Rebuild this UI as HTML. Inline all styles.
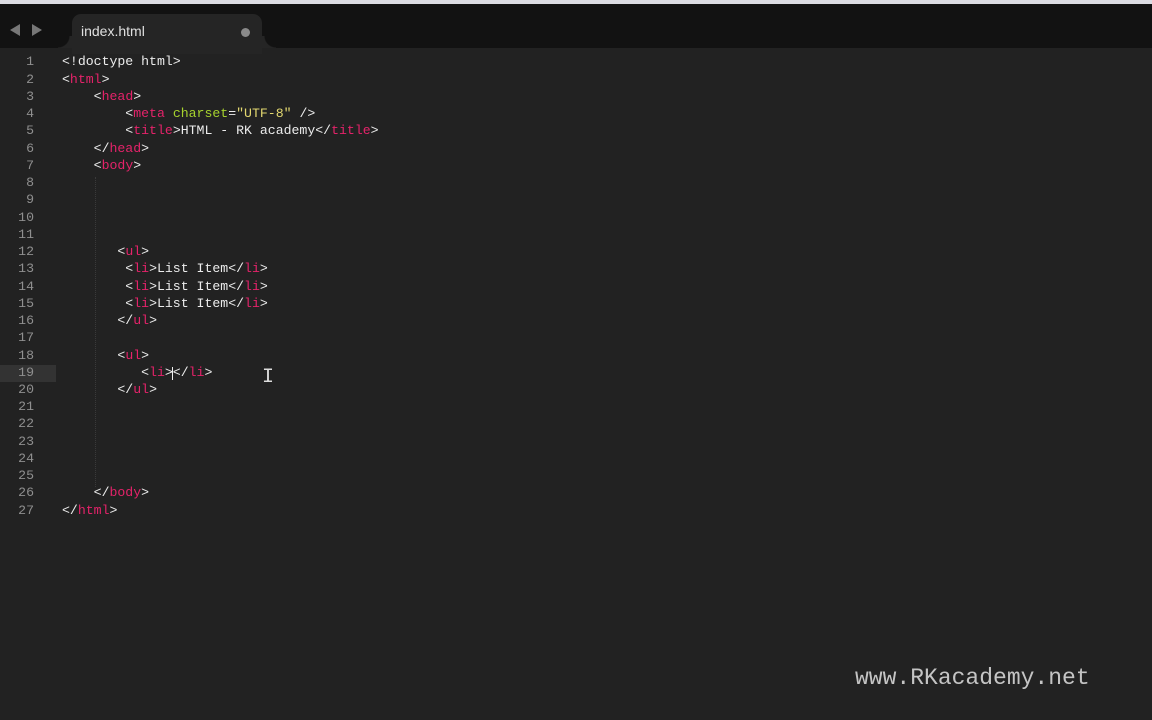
<!DOCTYPE html>
<html><head><meta charset="utf-8"><style>
html,body{margin:0;padding:0;width:1152px;height:720px;overflow:hidden;background:#1f1f1f;}
.top{position:absolute;left:0;top:0;width:1152px;height:4px;background:#dcdce2;}
.bar{position:absolute;left:0;top:4px;width:1152px;height:44px;background:#121212;}
.tab{position:absolute;left:72px;top:14px;width:190px;height:40px;background:#252525;border-radius:9px 9px 0 0;}
.tabl{position:absolute;left:58px;top:36px;width:16px;height:12px;background:radial-gradient(circle at 0 0,#121212 11px,#252525 12px);}
.tabr{position:absolute;left:260px;top:36px;width:16px;height:12px;background:radial-gradient(circle at 100% 0,#121212 11px,#252525 12px);}
.tabt{position:absolute;left:81px;top:23px;font:14px "Liberation Sans",sans-serif;color:#e0e0e0;}
.dot{position:absolute;left:241px;top:28px;width:9px;height:9px;border-radius:50%;background:#8a8a8a;}
.arr{position:absolute;top:24px;width:0;height:0;border-top:6px solid transparent;border-bottom:6px solid transparent;}
.ed{position:absolute;left:0;top:48px;width:1152px;height:672px;background:#222222;}
.w{position:absolute;left:0;top:2px;width:1152px;height:600px;}
.l{position:absolute;left:0;height:17px;line-height:17px;font:13.2px "Liberation Mono",monospace;color:#ececec;white-space:pre;}
.n{position:absolute;left:0;width:34px;text-align:right;color:#8f8f8f;}
.c{position:absolute;left:62px;}
.t{color:#e5236a;}.a{color:#a6d22e;}.s{color:#e3d870;}
.hl{position:absolute;left:0;top:363px;width:56px;height:17px;background:#333;}
.wm{position:absolute;left:855px;top:665px;font:23px "Liberation Mono",monospace;color:#c4c4c4;}
.guide{position:absolute;left:95px;width:1px;border-left:1px dotted #3a3a3a;}
</style></head><body>
<div class="top"></div>
<div class="bar"></div>
<div class="arr" style="left:10px;border-right:10px solid #777;"></div>
<div class="arr" style="left:32px;border-left:10px solid #777;"></div>
<div class="ed"></div>
<div class="tab"></div><div class="tabl"></div><div class="tabr"></div>
<div class="tabt">index.html</div>
<div class="dot"></div>
<div class="w">
<div class="hl"></div>
<div class="guide" style="top:175px;height:310px"></div>
<div class="l" style="top:52px"><span class="n">1</span><span class="c">&lt;!doctype html&gt;</span></div>
<div class="l" style="top:70px"><span class="n">2</span><span class="c">&lt;<span class="t">html</span>&gt;</span></div>
<div class="l" style="top:87px"><span class="n">3</span><span class="c">    &lt;<span class="t">head</span>&gt;</span></div>
<div class="l" style="top:104px"><span class="n">4</span><span class="c">        &lt;<span class="t">meta</span> <span class="a">charset</span>=<span class="s">"UTF-8"</span> /&gt;</span></div>
<div class="l" style="top:121px"><span class="n">5</span><span class="c">        &lt;<span class="t">title</span>&gt;HTML - RK academy&lt;/<span class="t">title</span>&gt;</span></div>
<div class="l" style="top:139px"><span class="n">6</span><span class="c">    &lt;/<span class="t">head</span>&gt;</span></div>
<div class="l" style="top:156px"><span class="n">7</span><span class="c">    &lt;<span class="t">body</span>&gt;</span></div>
<div class="l" style="top:173px"><span class="n">8</span></div>
<div class="l" style="top:190px"><span class="n">9</span></div>
<div class="l" style="top:208px"><span class="n">10</span></div>
<div class="l" style="top:225px"><span class="n">11</span></div>
<div class="l" style="top:242px"><span class="n">12</span><span class="c">       &lt;<span class="t">ul</span>&gt;</span></div>
<div class="l" style="top:259px"><span class="n">13</span><span class="c">        &lt;<span class="t">li</span>&gt;List Item&lt;/<span class="t">li</span>&gt;</span></div>
<div class="l" style="top:277px"><span class="n">14</span><span class="c">        &lt;<span class="t">li</span>&gt;List Item&lt;/<span class="t">li</span>&gt;</span></div>
<div class="l" style="top:294px"><span class="n">15</span><span class="c">        &lt;<span class="t">li</span>&gt;List Item&lt;/<span class="t">li</span>&gt;</span></div>
<div class="l" style="top:311px"><span class="n">16</span><span class="c">       &lt;/<span class="t">ul</span>&gt;</span></div>
<div class="l" style="top:328px"><span class="n">17</span></div>
<div class="l" style="top:346px"><span class="n">18</span><span class="c">       &lt;<span class="t">ul</span>&gt;</span></div>
<div class="l" style="top:363px"><span class="n">19</span><span class="c">          &lt;<span class="t">li</span>&gt;&lt;/<span class="t">li</span>&gt;</span></div>
<div style="position:absolute;left:172px;top:365px;width:1px;height:13px;background:#eee"></div>
<div style="position:absolute;left:262px;top:364px;font:20px 'Liberation Mono',monospace;color:#ddd">I</div>
<div class="l" style="top:380px"><span class="n">20</span><span class="c">       &lt;/<span class="t">ul</span>&gt;</span></div>
<div class="l" style="top:397px"><span class="n">21</span></div>
<div class="l" style="top:414px"><span class="n">22</span></div>
<div class="l" style="top:432px"><span class="n">23</span></div>
<div class="l" style="top:449px"><span class="n">24</span></div>
<div class="l" style="top:466px"><span class="n">25</span></div>
<div class="l" style="top:483px"><span class="n">26</span><span class="c">    &lt;/<span class="t">body</span>&gt;</span></div>
<div class="l" style="top:501px"><span class="n">27</span><span class="c">&lt;/<span class="t">html</span>&gt;</span></div>
</div>
<div class="wm">www.RKacademy.net</div>
</body></html>
